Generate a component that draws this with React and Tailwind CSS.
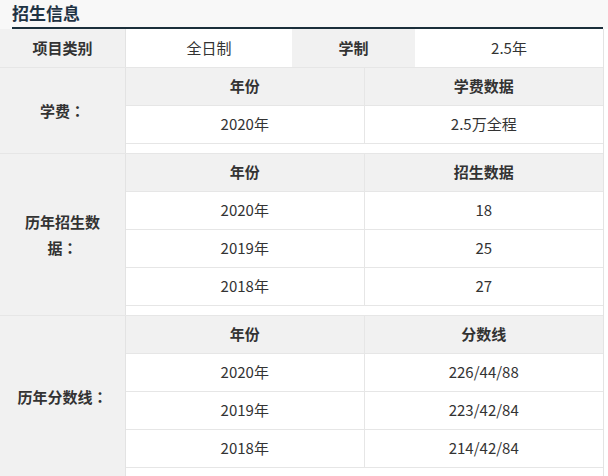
import React from "react";

const font = { fontFamily: '"Noto Sans CJK SC", "Noto Sans", sans-serif' };
const jp = { fontFamily: '"Noto Sans CJK JP", "Noto Sans CJK SC", sans-serif' };

function Section({ label, head, rows }) {
  return (
    <div className="flex border-b border-[#e6e6e6]">
      <div className="w-[126px] shrink-0 bg-[#f1f1f1] border-r border-[#e3e3e3] flex items-center justify-center px-[14px] text-center font-bold text-[#333] leading-[26px]">
        <span>
          {label}
          <span style={jp}>：</span>
        </span>
      </div>
      <div className="flex-1 flex flex-col">
        <div className="grid grid-cols-2 h-[38px] bg-[#f1f1f1] border-b border-[#e6e6e6] font-bold text-[#333]">
          <div className="flex items-center justify-center border-r border-[#e6e6e6]">年份</div>
          <div className="flex items-center justify-center">{head}</div>
        </div>
        {rows.map(([a, b]) => (
          <div key={a} className="grid grid-cols-2 h-[38px] bg-white border-b border-[#e6e6e6] text-[#333]">
            <div className="flex items-center justify-center border-r border-[#e6e6e6]">{a}</div>
            <div className="flex items-center justify-center">{b}</div>
          </div>
        ))}
        <div className="h-[9px] bg-white" />
      </div>
    </div>
  );
}

export default function App() {
  return (
    <div className="w-[608px] h-[476px] overflow-hidden bg-white text-[15px]" style={font}>
      <div className="h-[29px] bg-[#f8f8f8] pl-[12px] pr-[5px]">
        <div className="h-full border-b-[2px] border-[#1b2f3b] flex items-end pb-[3px]">
          <span className="text-[17px] font-bold text-[#1f3344] leading-[22px]">招生信息</span>
        </div>
      </div>
      <div className="w-[604px] border-r border-[#e3e3e3]">
        <div className="flex h-[39px] border-b border-[#e6e6e6]">
          <div className="w-[126px] bg-[#f1f1f1] border-r border-[#e3e3e3] flex items-center justify-center font-bold text-[#333]">项目类别</div>
          <div className="w-[166px] bg-white flex items-center justify-center text-[#333]">全日制</div>
          <div className="w-[123px] bg-[#f1f1f1] flex items-center justify-center font-bold text-[#333]">学制</div>
          <div className="flex-1 bg-white flex items-center justify-center text-[#333]">2.5年</div>
        </div>
        <Section label="学费" head="学费数据" rows={[["2020年", "2.5万全程"]]} />
        <Section
          label="历年招生数据"
          head="招生数据"
          rows={[["2020年", "18"], ["2019年", "25"], ["2018年", "27"]]}
        />
        <Section
          label="历年分数线"
          head="分数线"
          rows={[["2020年", "226/44/88"], ["2019年", "223/42/84"], ["2018年", "214/42/84"]]}
        />
      </div>
    </div>
  );
}
